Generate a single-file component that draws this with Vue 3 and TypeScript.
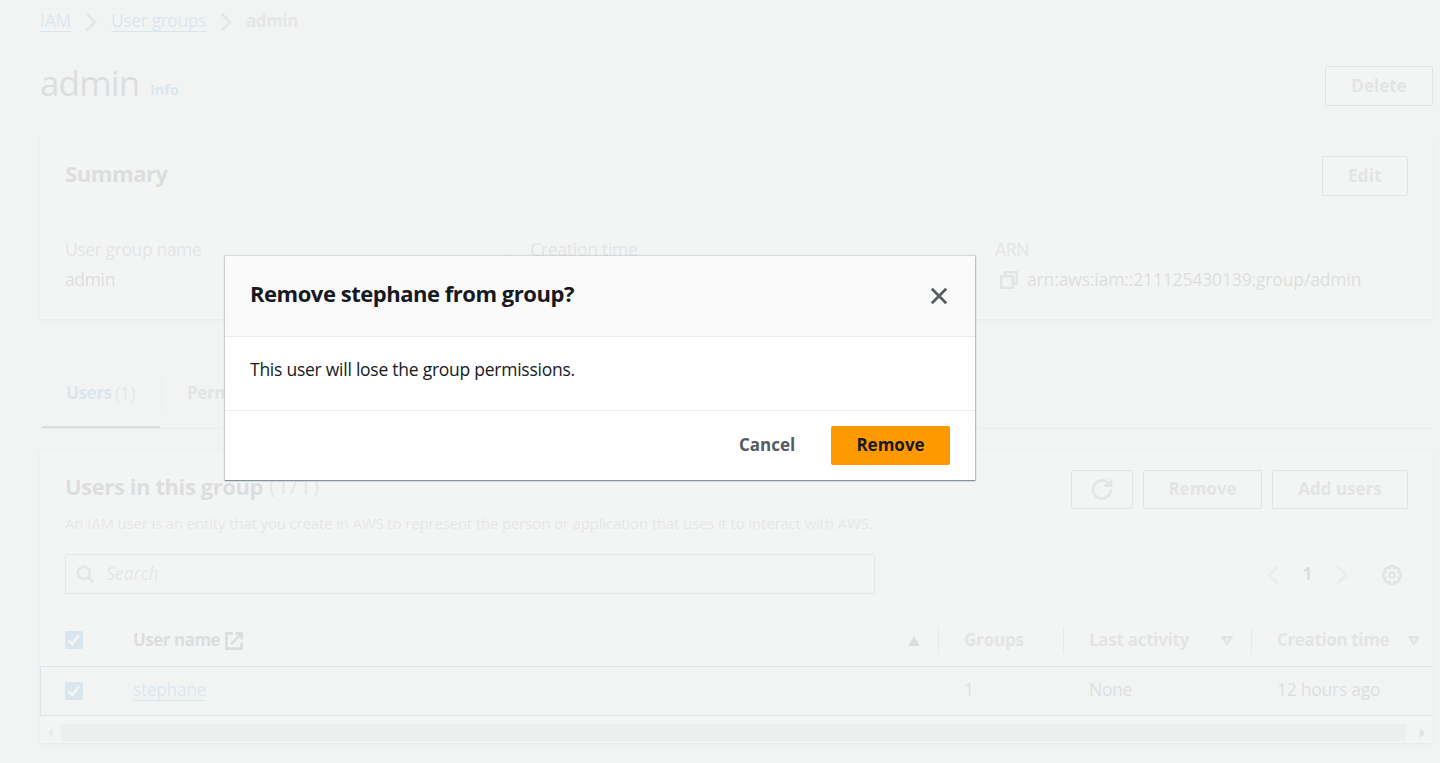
<script setup lang="ts">
import { ref } from 'vue'

interface Crumb { label: string; cls: string; link: boolean }
interface Member { name: string; groups: number; activity: string; created: string }

const crumbs: Crumb[] = [
  { label: 'IAM', cls: 'c-iam', link: true },
  { label: 'User groups', cls: 'c-groups', link: true },
  { label: 'admin', cls: 'c-current', link: false },
]
const members: Member[] = [
  { name: 'stephane', groups: 1, activity: 'None', created: '12 hours ago' },
]
const open = ref(true)
</script>

<template>
  <div class="app">
    <main class="page">
      <nav class="crumbs">
        <template v-for="(c, i) in crumbs" :key="c.label">
          <svg v-if="i > 0" class="crumb-sep" viewBox="0 0 12 20"><path d="M1.5 1.5 L10 10 L1.5 18.5" /></svg>
          <a v-if="c.link" class="link" :class="c.cls">{{ c.label }}</a>
          <span v-else :class="c.cls">{{ c.label }}</span>
        </template>
      </nav>

      <header class="title-row">
        <h1>admin</h1>
        <a class="info">Info</a>
        <button class="btn delete">Delete</button>
      </header>

      <section class="panel summary">
        <div class="summary-head">
          <h2>Summary</h2>
          <button class="btn edit">Edit</button>
        </div>
        <div class="summary-body">
          <div class="field">
            <div class="label l-name">User group name</div>
            <div class="v-name">admin</div>
          </div>
          <div class="field">
            <div class="label l-created">Creation time</div>
            <div>&nbsp;</div>
          </div>
          <div class="field">
            <div class="label l-arn">ARN</div>
            <div class="arn">
              <svg class="copy" viewBox="0 0 18 18"><path d="M5 4.5 V1.2 H16.8 V12.8 H13.5 M1.2 5.2 H12.8 V16.8 H1.2 Z" /></svg>
              <span>arn:aws:iam::211125430139:group/admin</span>
            </div>
          </div>
        </div>
      </section>

      <div class="tabs">
        <div class="tab active"><b>Users</b><span>(1)</span></div>
        <div class="tab-sep"></div>
        <div class="tab"><b>Permissions</b></div>
      </div>

      <section class="panel members">
        <div class="members-head">
          <div class="members-title">
            <h2>Users in this group</h2><span class="count">(1/1)</span>
          </div>
          <div class="actions">
            <button class="btn refresh">
              <svg viewBox="0 0 22 22"><path d="M18.6 6.6 A9 9 0 1 0 20 11.5 M20 1.2 V7.6 H13.2" /></svg>
            </button>
            <button class="btn remove-user">Remove</button>
            <button class="btn add">Add users</button>
          </div>
        </div>
        <p class="desc">An IAM user is an entity that you create in AWS to represent the person or application that uses it to interact with AWS.</p>
        <div class="tools">
          <div class="search">
            <svg viewBox="0 0 20 20"><circle cx="8.2" cy="8.2" r="6.4" /><path d="M12.8 12.8 L18.4 18.4" /></svg>
            <span>Search</span>
          </div>
          <div class="pager">
            <svg class="chev" viewBox="0 0 12 20"><path d="M10.5 1.5 L2 10 L10.5 18.5" /></svg>
            <span class="page-no">1</span>
            <svg class="chev" viewBox="0 0 12 20"><path d="M1.5 1.5 L10 10 L1.5 18.5" /></svg>
            <span class="pager-sep"></span>
            <svg class="gear" viewBox="0 0 20 20">
              <path d="M8.2 1.2 h3.6 l.6 2 2.4-.9 2.6 2.6 -.9 2.3 2.3.9 v3.7 l-2.3.9 .9 2.4 -2.6 2.6 -2.4-.9 -.6 2 h-3.6 l-.6-2 -2.4.9 -2.6-2.6 .9-2.4 -2.3-.9 v-3.7 l2.3-.9 -.9-2.3 2.6-2.6 2.4.9 z" />
              <circle cx="10" cy="10" r="2.7" />
            </svg>
          </div>
        </div>

        <div class="row thead">
          <div class="cell check"><span class="box"><svg viewBox="0 0 18 18"><path d="M3.6 9.2 L7.2 13 L14 4.2" /></svg></span><i class="sep faint"></i></div>
          <div class="cell name">
            <span class="h-name">User name</span>
            <svg class="ext" viewBox="0 0 18 18"><path d="M8 1.4 H1.4 V16.6 H16.6 V10.5 M10.5 1.4 H16.6 V7.5 M16.2 1.8 L6 12" /></svg>
            <svg class="sort up" viewBox="0 0 12 10"><path d="M6 0 L12 10 H0 Z" /></svg>
            <i class="sep"></i>
          </div>
          <div class="cell groups"><span class="h-groups">Groups</span><i class="sep"></i></div>
          <div class="cell activity">
            <span class="h-activity">Last activity</span>
            <svg class="sort" viewBox="0 0 12 10"><path d="M1.6 1.3 H10.4 L6 8 Z" /></svg>
            <i class="sep"></i>
          </div>
          <div class="cell created">
            <span class="h-created">Creation time</span>
            <svg class="sort" viewBox="0 0 12 10"><path d="M1.6 1.3 H10.4 L6 8 Z" /></svg>
          </div>
        </div>
        <div v-for="m in members" :key="m.name" class="row selected">
          <div class="cell check"><span class="box"><svg viewBox="0 0 18 18"><path d="M3.6 9.2 L7.2 13 L14 4.2" /></svg></span></div>
          <div class="cell name"><a class="link user">{{ m.name }}</a></div>
          <div class="cell groups">{{ m.groups }}</div>
          <div class="cell activity t-none">{{ m.activity }}</div>
          <div class="cell created t-hours">{{ m.created }}</div>
        </div>
        <div class="scroll">
          <svg class="arrow left" viewBox="0 0 5 10"><path d="M5 0 V10 L0 5 Z" /></svg>
          <div class="thumb"></div>
          <svg class="arrow" viewBox="0 0 5 10"><path d="M0 0 V10 L5 5 Z" /></svg>
        </div>
      </section>
    </main>

    <div v-if="open" class="veil">
      <div class="modal" role="dialog">
        <div class="modal-head">
          <h2>Remove stephane from group?</h2>
          <svg class="close" viewBox="0 0 18 18" @click="open = false"><path d="M1.8 1.8 L16.2 16.2 M16.2 1.8 L1.8 16.2" /></svg>
        </div>
        <div class="modal-body">This user will lose the group permissions.</div>
        <div class="modal-foot">
          <button class="cancel" @click="open = false">Cancel</button>
          <button class="confirm">Remove</button>
        </div>
      </div>
    </div>
  </div>
</template>

<style>
body { margin: 0; background: #f2f3f3; }
</style>

<style scoped>
* { box-sizing: border-box; }
.app {
  position: relative;
  width: 1440px;
  height: 763px;
  overflow: hidden;
  background: #f2f3f3;
  color: #16191f;
  font: 400 17.5px/30px "Open Sans", "Noto Sans", sans-serif;
  white-space: nowrap;
}
svg { display: block; flex: none; fill: none; stroke: #545b64; stroke-width: 2.6; }
h1, h2, p { margin: 0; }
h2 { font-size: 22px; font-weight: 700; line-height: 30px; letter-spacing: -.41px; }
button { font: 700 17px/30px "Open Sans", "Noto Sans", sans-serif; padding: 0; margin: 0; }
.page { padding: 0 7px 0 40px; }

.crumbs { display: flex; align-items: center; height: 44px; padding-bottom: 1px; }
.link { color: #0073bb; line-height: 18px; height: 21px; border-bottom: 1px solid #0073bb; }
.crumb-sep { width: 12px; height: 20px; margin: 1px 14px 0; stroke: #687078; }
.c-iam { width: 31px; letter-spacing: -.23px; }
.c-groups { width: 95px; letter-spacing: -.42px; }
.c-current { color: #687078; font-size: 17px; font-weight: 700; letter-spacing: -.4px; line-height: 20px; height: 21px; }

.title-row { display: flex; align-items: flex-start; height: 93px; }
h1 { width: 110px; margin-top: 17px; font-size: 35px; font-weight: 400; line-height: 44px; letter-spacing: -.85px; }
.info { margin-top: 31px; color: #0073bb; font-size: 14.5px; font-weight: 700; }

.btn {
  display: flex; align-items: center; justify-content: center;
  height: 40px; padding-bottom: 1px;
  border: 1px solid #545b64; border-radius: 2px;
  background: #fff; color: #545b64;
}
.delete { width: 108px; margin: 22px 0 0 auto; }
.edit { width: 86px; letter-spacing: .3px; }
.actions .btn { height: 39px; }
.actions .refresh { width: 62px; padding: 0 0 1px; }
.refresh svg { width: 22px; height: 22px; }
.remove-user { width: 119px; }
.add { width: 136px; }

.panel { background: #fff; box-shadow: 0 1px 2px #545b64a0, 0 0 1px #545b6480; }
.summary { height: 182px; }
.summary-head {
  display: flex; justify-content: space-between; height: 80px;
  padding: 19px 25px 0; background: #fafafa; border-bottom: 1px solid #eaeded;
}
.summary-head h2 { margin-top: 2px; }
.summary-body { display: grid; grid-template-columns: 464px 465px 1fr; padding-top: 17px; }
.field { padding-left: 25px; height: 64px; }
.field + .field { border-left: 1px solid #eaeded; }
.label { color: #545b64; }
.l-name { letter-spacing: -.4px; }
.l-created { letter-spacing: -.25px; }
.l-arn { letter-spacing: -.3px; }
.v-name { letter-spacing: -.35px; }
.arn { display: flex; align-items: center; letter-spacing: -.14px; }
.copy { width: 18px; height: 18px; margin: 2px 9px 0 5px; }

.tabs { display: flex; height: 110px; padding-top: 56px; border-bottom: 1px solid #aab7b8; }
.tab { display: flex; gap: 4px; height: 53px; padding: 3px 25px 0; color: #545b64; }
.tab b { font-size: 17px; font-weight: 700; letter-spacing: -.4px; }
.tab.active { width: 118px; margin-left: 2px; padding-left: 24px; border-bottom: 2px solid #16191f; }
.tab.active b { color: #0073bb; width: 45px; }
.tab.active span { color: #687078; }
.tab-sep { width: 1px; height: 36px; margin: 0 0 0 1px; background: #aab7b8; }

.members { margin-top: 21px; height: 293px; }
.members-head { display: flex; justify-content: space-between; padding: 20px 25px 0; height: 60px; }
.members-title { display: flex; margin-top: 1px; }
.members-title h2 { width: 204px; }
.count { color: #687078; font-size: 22.5px; letter-spacing: .7px; }
.actions { display: flex; gap: 10px; }
.desc { padding: 3px 25px 0; height: 44px; font-size: 15px; line-height: 20px; letter-spacing: -.16px; color: #687078; }
.tools { display: flex; justify-content: space-between; height: 60px; padding: 0 31px 0 25px; }
.search {
  display: flex; align-items: center; width: 810px; height: 40px; padding: 0 10px;
  border: 1px solid #687078; border-radius: 2px; background: #fff;
}
.search svg { width: 19px; height: 19px; stroke-width: 2.9; stroke: #687078; }
.search span { margin: 0 0 2px 11px; color: #687078; font-style: italic; letter-spacing: .05px; }
.pager { display: flex; align-items: center; height: 40px; }
.chev { width: 12px; height: 20px; margin-top: 2px; stroke: #aab7b8; }
.page-no { width: 57px; font-size: 17px; font-weight: 700; text-align: center; }
.pager-sep { width: 1px; height: 40px; margin: 0 16px 0 17px; background: #eaeded; }
.gear { width: 20px; height: 20px; margin-top: 2px; stroke-width: 2.3; }

.row { display: grid; grid-template-columns: 67px 832px 125px 188px 1fr; }
.thead { height: 52px; border-top: 1px solid #eaeded; color: #545b64; font-size: 17px; font-weight: 700; }
.cell { display: flex; align-items: center; padding: 0 12px 4px 25px; }
.thead .cell { position: relative; padding-bottom: 1px; }
.cell.name { padding-left: 26px; }
.thead .name { color: #16191f; padding-right: 19px; }
.h-name { letter-spacing: -.5px; width: 87px; }
.h-groups { letter-spacing: -.2px; }
.h-activity { letter-spacing: -.27px; }
.h-created { letter-spacing: -.36px; }
.ext { width: 18px; height: 18px; margin: 1px 0 0 5px; stroke: #16191f; }
.sort { width: 12px; height: 10px; margin: 1px 0 0 auto; stroke-width: 2.4; }
.sort.up { fill: #16191f; stroke: none; }
.activity .sort { margin-right: 7px; }
.thead .created { padding-right: 13px; }
.sep { position: absolute; right: 0; top: 12px; width: 1px; height: 27px; background: #879596; }
.sep.faint { background: #eaeded; right: -1px; }
.selected { height: 50px; border: 1px solid #0073bb; border-right: 0; background: #f1faff; }
.selected { grid-template-columns: 66px 832px 125px 188px 1fr; }
.selected .name .link { margin-top: 3px; line-height: 19px; }
.selected .check { padding: 0 0 0 24px; }
.box { width: 18px; height: 18px; border-radius: 2px; background: #0073bb; }
.box svg { width: 18px; height: 18px; stroke: #fff; }
.user { width: 73px; letter-spacing: -.39px; }
.t-none { letter-spacing: -.3px; }
.t-hours { letter-spacing: -.25px; }
.scroll { display: flex; align-items: center; height: 17px; margin-top: 8px; padding: 0 8px; }
.arrow { width: 5px; height: 10px; fill: #505050; stroke: none; margin-left: 14px; }
.arrow.left { margin: 0 8px 0 0; fill: #a3a3a3; }
.thumb { width: 1345px; height: 17px; background: #c1c1c1; }

.veil { position: absolute; inset: 0; background: rgba(242, 243, 243, .9); }
.modal {
  position: absolute; left: 225px; top: 256px; width: 750px; height: 224px;
  background: #fff;
  box-shadow: 0 1px 1px #84929a, 0 0 1px 1px #aab7b866, 1px 1px 1px #00000020;
}
.modal-head {
  display: flex; justify-content: space-between; height: 81px; padding: 22px 27px 0 25px;
  background: #fafafa; border-bottom: 1px solid #eaeded;
}
.modal-head h2 { letter-spacing: -.47px; }
.close { width: 18px; height: 18px; margin-top: 9px; stroke: #545b64; stroke-width: 2.7; }
.modal-body { height: 74px; padding: 17px 25px 0; border-bottom: 1px solid #eaeded; letter-spacing: -.25px; }
.modal-foot { display: flex; justify-content: flex-end; padding: 15px 25px 0; }
.cancel { width: 128px; height: 39px; padding-bottom: 1px; border: 0; background: none; color: #545b64; }
.confirm { width: 119px; height: 39px; padding-bottom: 1px; border: 0; border-radius: 2px; background: #ff9900; color: #16191f; }
</style>
